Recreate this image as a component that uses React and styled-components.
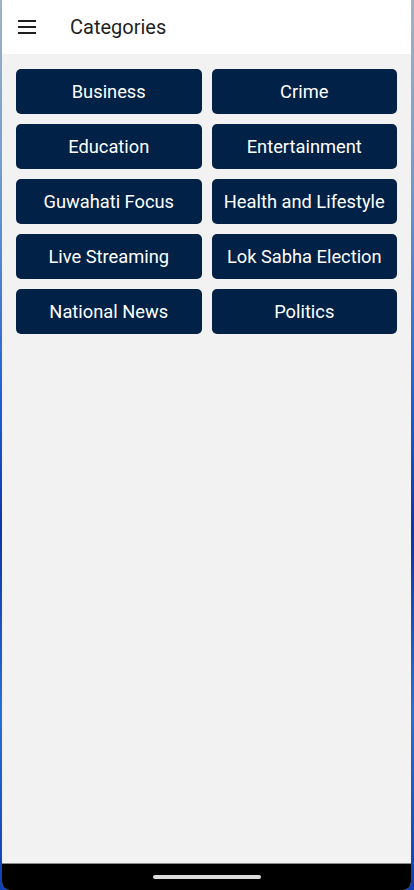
import React from 'react';
import styled, { createGlobalStyle } from 'styled-components';

const CATEGORIES = [
  'Business',
  'Crime',
  'Education',
  'Entertainment',
  'Guwahati Focus',
  'Health and Lifestyle',
  'Live Streaming',
  'Lok Sabha Election',
  'National News',
  'Politics',
];

const GlobalStyle = createGlobalStyle`
  html, body {
    margin: 0;
    padding: 0;
  }
  body {
    background: linear-gradient(
      180deg,
      #9fb3c8 0%,
      #6f9ccd 20%,
      #1e5fd6 45%,
      #0c35a8 60%,
      #2a6fd8 80%,
      #0f3fb4 100%
    );
    font-family: Roboto, 'Noto Sans', sans-serif;
  }
`;

function MenuIcon() {
  return (
    <svg width="18" height="14" viewBox="0 0 18 14">
      <rect x="0" y="0" width="18" height="2" fill="#1f1f1f" />
      <rect x="0" y="6" width="18" height="2" fill="#1f1f1f" />
      <rect x="0" y="12" width="18" height="2" fill="#1f1f1f" />
    </svg>
  );
}

function App() {
  return (
    <>
      <GlobalStyle />
      <Screen>
        <Header>
          <MenuButton>
            <MenuIcon />
          </MenuButton>
          <Title>Categories</Title>
        </Header>
        <Content>
          <Grid>
            {CATEGORIES.map(name => (
              <CategoryButton key={name}>{name}</CategoryButton>
            ))}
          </Grid>
        </Content>
        <NavBar>
          <HomeIndicator />
        </NavBar>
      </Screen>
    </>
  );
}
export default App;

const Screen = styled.div`
  display: flex;
  flex-direction: column;
  height: 890px;
  margin: 0 3px 0 2px;
  background-color: #f2f2f2;
  border-radius: 0 0 8px 8px;
  overflow: hidden;
`;

const Header = styled.header`
  display: flex;
  align-items: center;
  height: 54px;
  flex-shrink: 0;
  background-color: #ffffff;
`;

const MenuButton = styled.div`
  display: flex;
  align-items: center;
  justify-content: center;
  width: 18px;
  margin-left: 16px;
  margin-right: 34px;
`;

const Title = styled.h1`
  margin: 0;
  font-size: 20px;
  font-weight: 400;
  color: #1f1f1f;
`;

const Content = styled.main`
  flex: 1;
  padding: 15px 14px;
`;

const Grid = styled.div`
  display: grid;
  grid-template-columns: 1fr 1fr;
  gap: 10px;
`;

const CategoryButton = styled.button`
  height: 45px;
  padding: 0 4px;
  border: none;
  border-radius: 5px;
  background-color: #022147;
  color: #ffffff;
  font-family: Roboto, 'Noto Sans', sans-serif;
  font-size: 18.3px;
  white-space: nowrap;
  cursor: pointer;
`;

const NavBar = styled.div`
  display: flex;
  justify-content: center;
  height: 27px;
  flex-shrink: 0;
  padding-top: 11px;
  box-sizing: border-box;
  background-color: #000000;
  border-top: 1px solid #8a8a8a;
`;

const HomeIndicator = styled.div`
  width: 108px;
  height: 4px;
  border-radius: 2px;
  background-color: #dcdcdc;
`;
